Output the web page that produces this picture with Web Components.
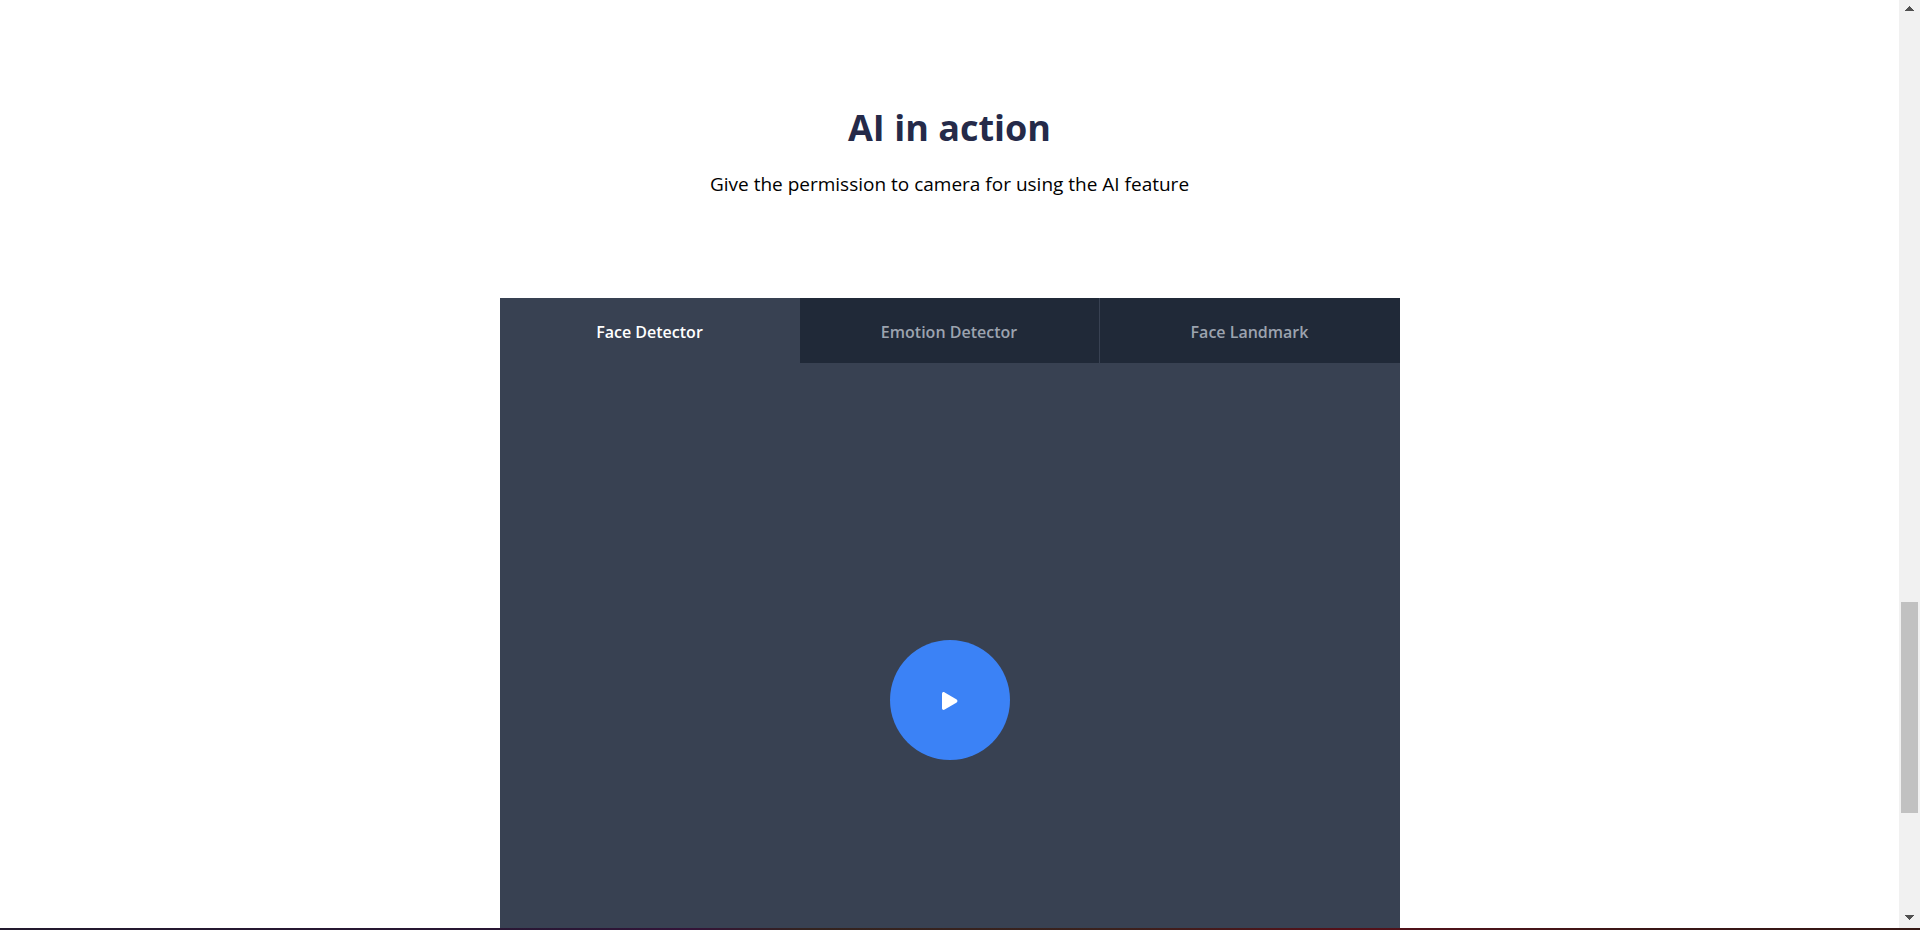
<!DOCTYPE html>
<html lang="en">
<head>
<meta charset="utf-8">
<title>AI in action</title>
<style>
html, body { height: 100%; margin: 0; }
body { overflow: hidden; background: #fff; font-family: "Open Sans", "Noto Sans", sans-serif; }
</style>
</head>
<body>
<app-window>
  <demo-section>
    <span slot="title">AI in action</span>
    <span slot="lead">Give the permission to camera for using the AI feature</span>
    <detector-card></detector-card>
  </demo-section>
</app-window>
<script>
const define = (name, html, setup) => customElements.define(name, class extends HTMLElement {
  constructor() {
    super();
    this.attachShadow({ mode: "open" }).innerHTML = html;
    if (setup) setup(this.shadowRoot);
  }
});

define("scroll-rail", `
<style>
:host { display: grid; grid-template-rows: 17px 1fr 17px; width: 21px; background: #f1f1f1; }
svg { display: block; width: 21px; height: 17px; fill: #505050; }
.track { display: flex; flex-direction: column; padding: 0 2px; }
.before { flex: 585; }
.thumb { flex: 211; background: #c1c1c1; }
.after { flex: 98; }
</style>
<svg viewBox="0 0 21 17" shape-rendering="crispEdges"><path d="M6 11h9v-1h-1v-1h-1v-1h-1v-1h-1v-1h-1v1h-1v1h-1v1h-1v1h-1z"/></svg>
<div class="track"><div class="before"></div><div class="thumb"></div><div class="after"></div></div>
<svg viewBox="0 0 21 17" shape-rendering="crispEdges"><path d="M6 4h9v1h-1v1h-1v1h-1v1h-1v1h-1v-1h-1v-1h-1v-1h-1v-1h-1z"/></svg>
`);

define("play-button", `
<style>
:host { display: block; }
button { display: grid; place-items: center; width: 120px; height: 120px; padding: 2px 0 0; border: 0; border-radius: 50%; background: #3b82f6; cursor: pointer; }
svg { display: block; width: 16px; height: 18px; fill: #fff; }
</style>
<button type="button" aria-label="Play"><svg viewBox="0 0 16 18"><path d="M0 1.8C0 .3 1.4-.3 2.7.4L14.3 7.2C15.8 8.1 15.8 9.9 14.3 10.8L2.7 17.6C1.4 18.3 0 17.7 0 16.2Z"/></svg></button>
`);

define("detector-card", `
<style>
:host { display: flex; flex-direction: column; flex: 1; width: 100%; max-width: 900px; background: #384152; }
.tabs { display: grid; grid-template-columns: repeat(3, 1fr); }
button { height: 65px; padding: 2px 0 0; border: 0; background: #202938; color: #9ca3af; font: 600 16px/24px "Open Sans", "Noto Sans", sans-serif; cursor: pointer; }
button:nth-child(2) { border-right: 1px solid #384152; }
button[aria-selected="true"] { background: #384152; color: #fff; }
.stage { display: flex; justify-content: center; align-items: flex-start; flex: 1; padding-top: 277px; }
</style>
<div class="tabs" role="tablist">
  <button type="button" role="tab" aria-selected="true">Face Detector</button>
  <button type="button" role="tab" aria-selected="false">Emotion Detector</button>
  <button type="button" role="tab" aria-selected="false">Face Landmark</button>
</div>
<div class="stage"><play-button></play-button></div>
`, root => {
  const tabs = root.querySelectorAll("button");
  tabs.forEach(tab => tab.addEventListener("click", () =>
    tabs.forEach(other => other.setAttribute("aria-selected", String(other === tab)))));
});

define("demo-section", `
<style>
:host { display: flex; flex-direction: column; align-items: center; flex: 1; padding-top: 104px; }
h2, p { margin: 0; text-align: center; }
h2 { color: #252a49; font-size: 36px; line-height: 48px; font-weight: 700; }
p { color: #000; font-size: 19px; line-height: 32px; margin: 16px 0 98px; }
</style>
<h2><slot name="title"></slot></h2>
<p><slot name="lead"></slot></p>
<slot></slot>
`);

define("app-window", `
<style>
:host { display: grid; grid-template: 1fr 2px / 1fr 21px; height: 100vh; }
main { display: flex; min-width: 0; min-height: 0; overflow: hidden; }
.edge { grid-column: 1 / -1; background: linear-gradient(90deg, #231a2e 0%, #2a1635 30%, #331338 36%, #33231f 42%, #3a211d 58%, #541019 70%, #4a151b 78%, #3a1717 86%, #351815 100%); }
</style>
<main><slot></slot></main>
<scroll-rail></scroll-rail>
<div class="edge"></div>
`);
</script>
</body>
</html>
